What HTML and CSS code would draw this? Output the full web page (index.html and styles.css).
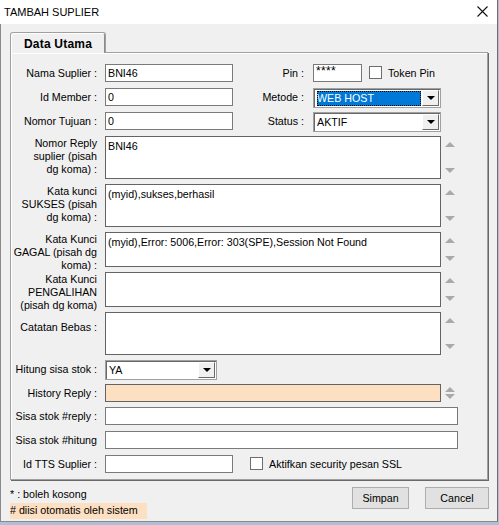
FILE: index.html
```html
<!DOCTYPE html>
<html lang="id">
<head>
    <meta charset="UTF-8">
    <title>Tambah Suplier</title>
    <link rel="stylesheet" href="styles.css">
</head>
<body>
    <div class="window">
        <div class="titlebar">
            <span class="title">TAMBAH SUPLIER</span>
            <svg class="close" width="11" height="11" viewBox="0 0 11 11">
                <path d="M0.5 0.5 L10.5 10.5 M10.5 0.5 L0.5 10.5" stroke="#111" stroke-width="1.1" fill="none"/>
            </svg>
        </div>

        <div class="content">
            <div class="tabs">
                <div class="tab">Data Utama</div>
            </div>

            <div class="panel">
                <div class="row h19">
                    <div class="lbl">Nama Suplier :</div>
                    <div class="txt w128">BNI46</div>
                    <div class="lbl-right">Pin :</div>
                    <div class="txt w49 pin">****</div>
                    <span class="check"></span>
                    <span class="check-text">Token Pin</span>
                </div>

                <div class="row h19">
                    <div class="lbl">Id Member :</div>
                    <div class="txt w128">0</div>
                    <div class="lbl-right">Metode :</div>
                    <div class="select w128">
                        <div class="select-value selected"><span>WEB HOST</span></div>
                        <div class="select-btn"><span class="tri"></span></div>
                    </div>
                </div>

                <div class="row h19">
                    <div class="lbl">Nomor Tujuan :</div>
                    <div class="txt w128">0</div>
                    <div class="lbl-right">Status :</div>
                    <div class="select w128">
                        <div class="select-value"><span>AKTIF</span></div>
                        <div class="select-btn"><span class="tri"></span></div>
                    </div>
                </div>

                <div class="row h43">
                    <div class="lbl multi">Nomor Reply<br>suplier (pisah<br>dg koma) :</div>
                    <div class="memo">BNI46</div>
                    <div class="spin"><span class="up"></span><span class="down"></span></div>
                </div>

                <div class="row h43">
                    <div class="lbl multi">Kata kunci<br>SUKSES (pisah<br>dg koma) :</div>
                    <div class="memo">(myid),sukses,berhasil</div>
                    <div class="spin"><span class="up"></span><span class="down"></span></div>
                </div>

                <div class="row h36">
                    <div class="lbl multi">Kata Kunci<br>GAGAL (pisah dg<br>koma) :</div>
                    <div class="memo">(myid),Error: 5006,Error: 303(SPE),Session Not Found</div>
                    <div class="spin"><span class="up"></span><span class="down"></span></div>
                </div>

                <div class="row h36">
                    <div class="lbl multi">Kata Kunci<br>PENGALIHAN<br>(pisah dg koma)</div>
                    <div class="memo"></div>
                    <div class="spin"><span class="up"></span><span class="down"></span></div>
                </div>

                <div class="row h43">
                    <div class="lbl multi single">Catatan Bebas :</div>
                    <div class="memo"></div>
                    <div class="spin"><span class="up"></span><span class="down"></span></div>
                </div>

                <div class="row h19">
                    <div class="lbl">Hitung sisa stok :</div>
                    <div class="select w112">
                        <div class="select-value"><span>YA</span></div>
                        <div class="select-btn"><span class="tri"></span></div>
                    </div>
                </div>

                <div class="row h18">
                    <div class="lbl">History Reply :</div>
                    <div class="memo auto"></div>
                    <div class="spin tight"><span class="up"></span><span class="down"></span></div>
                </div>

                <div class="row h19">
                    <div class="lbl">Sisa stok #reply :</div>
                    <div class="txt w353"></div>
                </div>

                <div class="row h19">
                    <div class="lbl">Sisa stok #hitung</div>
                    <div class="txt w353"></div>
                </div>

                <div class="row h18">
                    <div class="lbl">Id TTS Suplier :</div>
                    <div class="txt w128"></div>
                    <span class="check ssl"></span>
                    <span class="check-text">Aktifkan security pesan SSL</span>
                </div>
            </div>

            <div class="footer">
                <div class="notes">
                    <div>* : boleh kosong</div>
                    <div class="auto-note"># diisi otomatis oleh sistem</div>
                </div>
                <div class="buttons">
                    <button class="btn simpan">Simpan</button>
                    <button class="btn cancel">Cancel</button>
                </div>
            </div>
        </div>
    </div>
</body>
</html>
```

FILE: styles.css
```css
* {
    box-sizing: border-box;
}

body {
    margin: 0;
    width: 499px;
    height: 525px;
    background: #aebfd6;
    font-family: "Liberation Sans", Arial, sans-serif;
    font-size: 10.7px;
    color: #000;
    overflow: hidden;
}

.window {
    width: 498px;
    height: 522px;
    background: #f0f0f0;
    border-left: 1px solid #8a8a8a;
    border-right: 1px solid #6e6e6e;
    border-bottom: 1px solid #8a8a8a;
}

.titlebar {
    height: 24px;
    background: #fff;
    display: flex;
    align-items: center;
    justify-content: space-between;
    padding: 0 9px 1px 4px;
    margin-left: -1px;
}

.title {
    font-size: 11px;
}

.content {
    padding: 8px 8px 0 9px;
}

/* tab header */
.tabs {
    display: flex;
    position: relative;
    z-index: 1;
}

.tab {
    width: 96px;
    height: 21px;
    margin-bottom: -1px;
    padding-top: 4px;
    text-align: center;
    font-size: 12px;
    font-weight: bold;
    letter-spacing: 0.2px;
    background: #f0f0f0;
    border: 1px solid #a0a0a0;
    border-bottom: none;
    border-radius: 3px 3px 0 0;
    box-shadow: inset 1px 1px #fff, inset -1px 0 #8c8c8c;
}

.panel {
    width: 478px;
    height: 428px;
    border: 1px solid #a0a0a0;
    box-shadow: inset 1px 1px #fff, 1px 1px #696969;
    padding: 11px 0 0 0;
}

.row {
    display: flex;
    align-items: flex-start;
    margin-bottom: 5px;
}

.h18 { height: 18px; }
.h19 { height: 19px; }
.h36 { height: 35px; }
.h43 { height: 43px; }

.lbl {
    width: 86px;
    margin-right: 8px;
    text-align: right;
    white-space: nowrap;
    line-height: 18px;
}

.lbl.multi {
    line-height: 13px;
    padding-top: 1px;
}

.lbl.single {
    padding-top: 9px;
}

.lbl-right {
    width: 71px;
    margin-right: 9px;
    text-align: right;
    line-height: 18px;
}

.txt {
    height: 18px;
    background: #fff;
    border: 1px solid #7a7a7a;
    padding: 0 2px;
    line-height: 16px;
}

.txt.pin {
    font-size: 12px;
    line-height: 13px;
    letter-spacing: 0.3px;
}

.w49 { width: 49px; }
.w112 { width: 112px; }
.w128 { width: 128px; }
.w353 { width: 353px; }

.memo {
    width: 336px;
    height: 100%;
    background: #fff;
    border: 1px solid #646464;
    padding: 3px 2px;
    line-height: 13px;
    white-space: nowrap;
    overflow: hidden;
}

.memo.auto {
    background: #fddfc1;
}

.spin {
    width: 10px;
    height: 100%;
    margin-left: 4px;
    padding: 6px 0;
    display: flex;
    flex-direction: column;
    justify-content: space-between;
}

.spin.tight {
    padding: 3px 0;
}

.up, .down {
    width: 0;
    height: 0;
    border-left: 5px solid transparent;
    border-right: 5px solid transparent;
}

.up {
    border-bottom: 5px solid #a9a9a9;
}

.down {
    border-top: 5px solid #a9a9a9;
}

/* combo box */
.select {
    height: 20px;
    display: flex;
    background: #fff;
    border: 1px solid #a0a0a0;
    box-shadow: inset 1px 1px #696969;
    padding: 2px 1px 1px 2px;
}

.select-value {
    flex: 1;
    line-height: 14px;
    padding-left: 1px;
}

.select-value.selected span {
    display: block;
    height: 100%;
    background: #0078d7;
    color: #fff;
    outline: 1px dotted #000;
    outline-offset: -1px;
}

.select-btn {
    width: 17px;
    margin-top: -1px;
    margin-left: 1px;
    background: #f0f0f0;
    border: 1px solid;
    border-color: #fff #696969 #696969 #fff;
    display: flex;
    align-items: center;
    justify-content: center;
}

.tri {
    width: 0;
    height: 0;
    border-left: 4px solid transparent;
    border-right: 4px solid transparent;
    border-top: 4px solid #000;
}

.check {
    width: 13px;
    height: 13px;
    margin: 2px 6px 0 7px;
    background: #fff;
    border: 1px solid #6d6d6d;
}

.check.ssl {
    margin-left: 17px;
    margin-top: 2px;
}

.check-text {
    line-height: 18px;
}

.footer {
    display: flex;
    justify-content: space-between;
    padding-top: 7px;
}

.notes {
    line-height: 15px;
}

.auto-note {
    width: 137px;
    height: 16px;
    margin-top: 1px;
    background: #fddfc1;
}

.buttons {
    display: flex;
    gap: 16px;
}

.btn {
    height: 22px;
    background: #e1e1e1;
    border: 1px solid #adadad;
    font-family: inherit;
    font-size: 10.7px;
    padding: 0;
}

.simpan { width: 57px; }
.cancel { width: 64px; }
```
